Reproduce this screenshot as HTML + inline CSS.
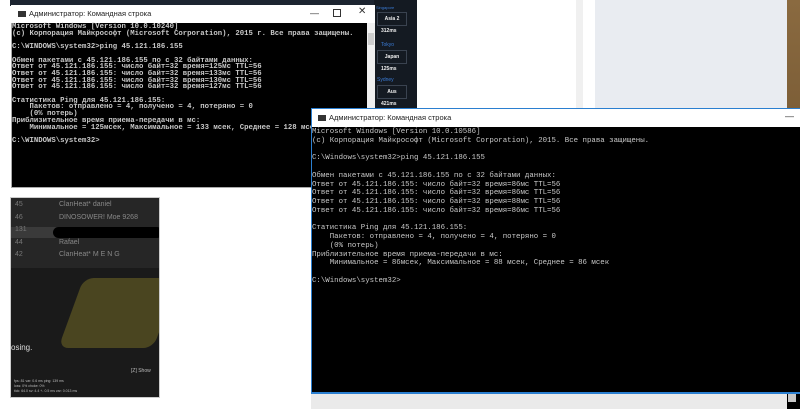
<!DOCTYPE html><html><head><meta charset="utf-8"><style>
*{margin:0;padding:0;box-sizing:border-box}
body{width:800px;height:409px;overflow:hidden;background:#fff;position:relative;font-family:"Liberation Sans","Noto Sans CJK JP",sans-serif}
.a{position:absolute}
pre{font-family:"Liberation Mono","DejaVu Sans Mono",monospace;color:#c8c8c8;white-space:pre}
.tt{font-size:7.5px;color:#222;position:absolute}
</style></head><body>
<div class="a" style="left:10px;top:0;width:365px;height:6px;background:#1c2430"></div>
<div class="a" style="left:374px;top:0;width:43px;height:108px;background:#141a22"></div>
<div class="a" style="left:376px;top:5px;font-size:4px;color:#3a7bd5">Singapore</div>
<div class="a" style="left:377px;top:12px;width:30px;height:14px;border:1px solid #3a4350;color:#eee;font-size:5px;font-weight:bold;text-align:center;line-height:12px">Asia 2</div>
<div class="a" style="left:381px;top:28px;font-size:5px;color:#eee;font-weight:bold">312ms</div>
<div class="a" style="left:381px;top:42px;font-size:5px;color:#3a7bd5">Tokyo</div>
<div class="a" style="left:377px;top:50px;width:30px;height:14px;border:1px solid #3a4350;color:#eee;font-size:5px;font-weight:bold;text-align:center;line-height:12px">Japan</div>
<div class="a" style="left:381px;top:66px;font-size:5px;color:#eee;font-weight:bold">125ms</div>
<div class="a" style="left:377px;top:77px;font-size:5px;color:#3a7bd5">Sydney</div>
<div class="a" style="left:377px;top:85px;width:30px;height:14px;border:1px solid #3a4350;color:#eee;font-size:5px;font-weight:bold;text-align:center;line-height:12px">Aus</div>
<div class="a" style="left:381px;top:101px;font-size:5px;color:#eee;font-weight:bold">421ms</div>
<div class="a" style="left:576px;top:0;width:7px;height:108px;background:#f0f0f0"></div>
<div class="a" style="left:595px;top:0;width:192px;height:108px;background:#e9ecf1"></div>
<div class="a" style="left:787px;top:0;width:13px;height:409px;background:linear-gradient(#8a6a40,#5a4020)"></div>

<!-- window 1 -->
<div class="a" style="left:11px;top:5px;width:364px;height:183px;background:#000;border:1px solid #aaa"></div>
<div class="a" style="left:11px;top:5px;width:364px;height:18px;background:#fff"></div>
<div class="a" style="left:18px;top:11px;width:8px;height:6px;background:#333"></div>
<div class="tt" style="left:29px;top:9px">Администратор: Командная строка</div>
<div class="a" style="left:310px;top:8px;font-size:9px;color:#333">—</div>
<div class="a" style="left:333px;top:9px;width:8px;height:8px;border:1px solid #333"></div>
<div class="a" style="left:358px;top:6px;font-size:10px;color:#333">✕</div>
<div class="a" style="left:367px;top:23px;width:8px;height:164px;background:#f0f0f0"></div>
<div class="a" style="left:368px;top:33px;width:6px;height:12px;background:#cdcdcd"></div>
<pre class="a" style="left:12px;top:24px;font-size:7.3px;line-height:6.7px;font-weight:bold">Microsoft Windows [Version 10.0.10240]
(c) Корпорация Майкрософт (Microsoft Corporation), 2015 г. Все права защищены.

C:\WINDOWS\system32&gt;ping 45.121.186.155

Обмен пакетами с 45.121.186.155 по с 32 байтами данных:
Ответ от 45.121.186.155: число байт=32 время=125мс TTL=56
Ответ от 45.121.186.155: число байт=32 время=133мс TTL=56
Ответ от 45.121.186.155: число байт=32 время=130мс TTL=56
Ответ от 45.121.186.155: число байт=32 время=127мс TTL=56

Статистика Ping для 45.121.186.155:
    Пакетов: отправлено = 4, получено = 4, потеряно = 0
    (0% потерь)
Приблизительное время приема-передачи в мс:
    Минимальное = 125мсек, Максимальное = 133 мсек, Среднее = 128 мсек

C:\WINDOWS\system32&gt;</pre>

<!-- game -->
<div class="a" style="left:10px;top:197px;width:150px;height:201px;background:#1a1a1a;border:1px solid #ccc;overflow:hidden">
<div class="a" style="left:0;top:0;width:150px;height:70px;background:#262626"></div>
<div class="a" style="left:0;top:29px;width:150px;height:11px;background:#3a3a3a"></div>
<div class="a" style="left:42px;top:29px;width:110px;height:11px;background:#000;border-radius:6px"></div>
<div class="a" style="left:60px;top:80px;width:95px;height:70px;background:#4a4520;transform:skewX(-20deg);border-radius:10px"></div>
<div class="a" style="left:4px;top:1px;font-size:7px;color:#777;line-height:12.5px">45<br>46<br>131<br>44<br>42</div>
<div class="a" style="left:48px;top:1px;font-size:7px;color:#888;line-height:12.5px">ClanHeat* daniel<br>DINOSOWER! Moe 9268<br><br>Rafael<br>ClanHeat* M E N G</div>
<div class="a" style="left:0px;top:145px;font-size:8px;color:#ddd">osing.</div>
<div class="a" style="left:120px;top:170px;font-size:5px;color:#bbb">[Z] Show</div>
<div class="a" style="left:3px;top:181px;font-size:3.5px;color:#bbb;line-height:5px">fps: 81 var: 0.6 ms ping: 139 ms<br>loss: 0% choke: 0%<br>tick: 64.0 sv: 4.4 +- 0.5 ms var: 0.013 ms</div>
</div>

<!-- window 2 -->
<div class="a" style="left:311px;top:108px;width:489px;height:301px;background:#000;border-left:1px solid #2b7fd0"></div>
<div class="a" style="left:311px;top:108px;width:489px;height:19px;background:#fff;border-top:1px solid #2b7fd0;border-left:1px solid #2b7fd0"></div>
<div class="a" style="left:318px;top:115px;width:8px;height:6px;background:#333"></div>
<div class="tt" style="left:329px;top:113px">Администратор: Командная строка</div>
<div class="a" style="left:785px;top:111px;font-size:9px;color:#333">—</div>
<div class="a" style="left:311px;top:392px;width:489px;height:2px;background:#2b7fd0"></div>
<div class="a" style="left:311px;top:394px;width:476px;height:15px;background:#eaeaea"></div>
<div class="a" style="left:788px;top:394px;width:8px;height:8px;background:#c8c8c8"></div>
<pre class="a" style="left:312px;top:128px;font-size:7.4px;line-height:8.75px">Microsoft Windows [Version 10.0.10586]
(c) Корпорация Майкрософт (Microsoft Corporation), 2015. Все права защищены.

C:\Windows\system32&gt;ping 45.121.186.155

Обмен пакетами с 45.121.186.155 по с 32 байтами данных:
Ответ от 45.121.186.155: число байт=32 время=86мс TTL=56
Ответ от 45.121.186.155: число байт=32 время=86мс TTL=56
Ответ от 45.121.186.155: число байт=32 время=88мс TTL=56
Ответ от 45.121.186.155: число байт=32 время=86мс TTL=56

Статистика Ping для 45.121.186.155:
    Пакетов: отправлено = 4, получено = 4, потеряно = 0
    (0% потерь)
Приблизительное время приема-передачи в мс:
    Минимальное = 86мсек, Максимальное = 88 мсек, Среднее = 86 мсек

C:\Windows\system32&gt;</pre>
</body></html>
